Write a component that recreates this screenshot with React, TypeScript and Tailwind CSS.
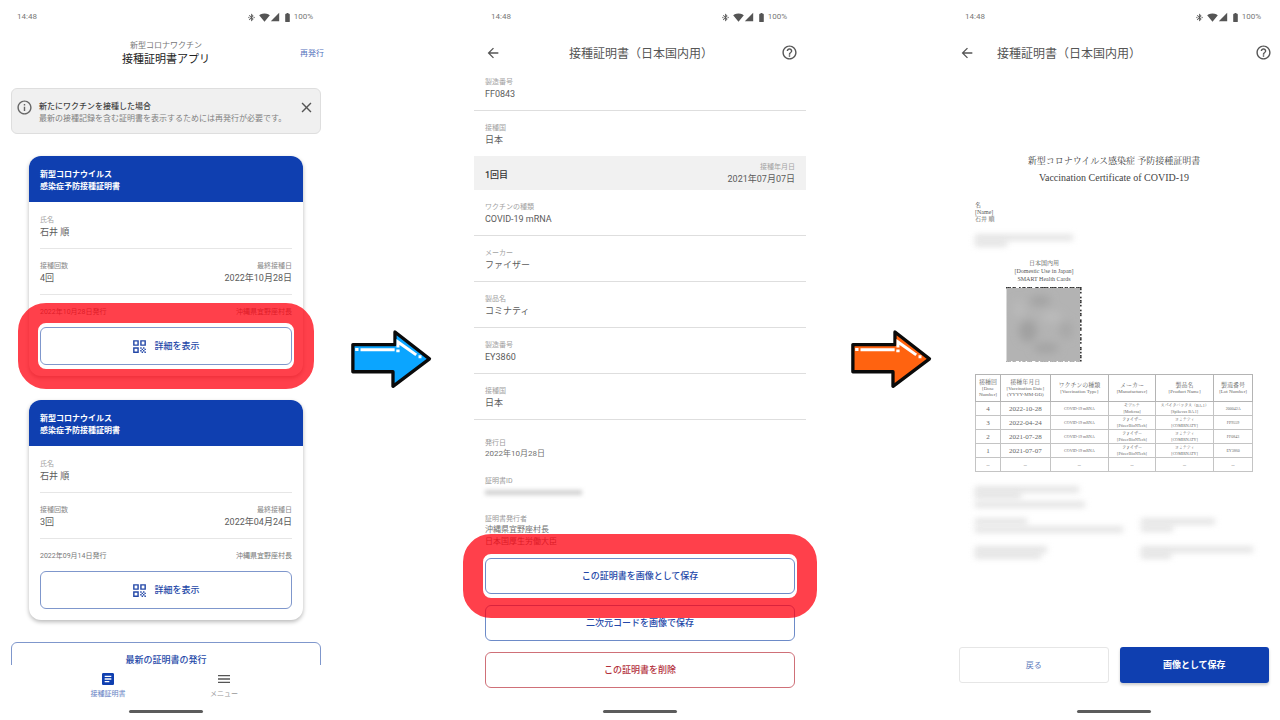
import type { ReactNode } from 'react'
import {
  MdArrowBack,
  MdArticle,
  MdBatteryFull,
  MdBluetoothConnected,
  MdClose,
  MdHelpOutline,
  MdInfoOutline,
  MdMenu,
  MdQrCode,
  MdSignalCellular4Bar,
  MdSignalWifi4Bar,
} from 'react-icons/md'

const certificates = [
  { name: '石井 順', count: '4回', lastDate: '2022年10月28日', issued: '2022年10月28日発行', issuer: '沖縄県宜野座村長', marked: true },
  { name: '石井 順', count: '3回', lastDate: '2022年04月24日', issued: '2022年09月14日発行', issuer: '沖縄県宜野座村長', marked: false },
]

const firstDose = [
  { label: 'ワクチンの種類', value: 'COVID-19 mRNA' },
  { label: 'メーカー', value: 'ファイザー' },
  { label: '製品名', value: 'コミナティ' },
  { label: '製造番号', value: 'EY3860' },
  { label: '接種国', value: '日本' },
]

const columns = [
  { ja: '接種回', en: ['[Dose', 'Number]'], width: 'w-[9%]' },
  { ja: '接種年月日', en: ['[Vaccination Date]', '(YYYY-MM-DD)'], width: 'w-[18%]' },
  { ja: 'ワクチンの種類', en: ['[Vaccination Type]'], width: 'w-[21%]' },
  { ja: 'メーカー', en: ['[Manufacturer]'], width: 'w-[17%]' },
  { ja: '製品名', en: ['[Product Name]'], width: 'w-[21%]' },
  { ja: '製造番号', en: ['[Lot Number]'], width: 'w-[14%]' },
]

const doses = [
  { no: '4', date: '2022-10-28', maker: ['モデルナ', '[Moderna]'], product: ['スパイクバックス（BA.1）', '[Spikevax BA.1]'], lot: '200042A' },
  { no: '3', date: '2022-04-24', maker: ['ファイザー', '[Pfizer/BioNTech]'], product: ['コミナティ', '[COMIRNATY]'], lot: 'FP9559' },
  { no: '2', date: '2021-07-28', maker: ['ファイザー', '[Pfizer/BioNTech]'], product: ['コミナティ', '[COMIRNATY]'], lot: 'FF0843' },
  { no: '1', date: '2021-07-07', maker: ['ファイザー', '[Pfizer/BioNTech]'], product: ['コミナティ', '[COMIRNATY]'], lot: 'EY3860' },
]

// Module pattern along the visible edges of the code
const topEdge = '1110110010110111001101111101111011101101110111'
const rightEdge = '1101001011010010110011010110010110100110101101'

function StatusBar() {
  return (
    <div className="flex h-8 shrink-0 items-center justify-between pt-0.5 pr-[19px] pl-[17px] text-[8px] text-[#777]">
      <span>14:48</span>
      <div className="flex items-center text-[#555]">
        <MdBluetoothConnected size={9} className="mr-[3px]" />
        <MdSignalWifi4Bar size={11} />
        <MdSignalCellular4Bar size={10} className="mr-0.5" />
        <MdBatteryFull size={11} />
        <span className="pl-px text-[#777]">100%</span>
      </div>
    </div>
  )
}

function HomeBar() {
  return (
    <div className="mt-auto flex h-[17px] shrink-0 items-center justify-center pb-px">
      <div className="h-[3px] w-[74px] rounded-full bg-[#5c5c5c]" />
    </div>
  )
}

function Highlight() {
  return (
    <div className="pointer-events-none absolute -top-6 -right-[22px] -bottom-6 -left-[22px] z-10 rounded-[28px] border-20 border-[#ff000f]/75" />
  )
}

function Field({ label, value }: { label: string; value: string }) {
  return (
    <div className="pt-3 pb-[9px]">
      <div className="text-[7px] leading-[10px] text-[#a3a3a3]">{label}</div>
      <div className="text-[9px] leading-[14px] text-[#5c5c5c]">{value}</div>
    </div>
  )
}

function CertificateCard({ cert }: { cert: (typeof certificates)[number] }) {
  return (
    <article className="rounded-xl bg-white shadow-[0_2px_4px_rgba(0,0,0,0.28)]">
      <h2 className="rounded-t-xl bg-[#0f3fb0] px-[11px] pt-[13px] pb-[9px] text-[8px] leading-3 font-bold text-white">
        新型コロナウイルス
        <br />
        感染症予防接種証明書
      </h2>
      <div className="px-[11px] pt-px pb-[11px]">
        <div className="border-b border-[#e6e6e6]">
          <Field label="氏名" value={cert.name} />
        </div>
        <div className="flex justify-between border-b border-[#e6e6e6] pt-3 pb-[9px]">
          <div>
            <div className="text-[7px] leading-[10px] text-[#888]">接種回数</div>
            <div className="text-[9px] leading-[14px] text-[#5c5c5c]">{cert.count}</div>
          </div>
          <div className="text-right">
            <div className="text-[7px] leading-[10px] text-[#888]">最終接種日</div>
            <div className="text-[9px] leading-[14px] text-[#5c5c5c]">{cert.lastDate}</div>
          </div>
        </div>
        <div className="flex justify-between pt-[11px] pb-[9px] text-[7px] leading-3 text-[#777]">
          <span>{cert.issued}</span>
          <span>{cert.issuer}</span>
        </div>
        <div className="relative">
          <button className="flex h-[38px] w-full items-center justify-center gap-[6px] rounded-md border border-[#7f97cc] pt-px pr-px text-[9px] font-medium text-[#2448a8]">
            <MdQrCode size={17} />
            <span className="pt-px">詳細を表示</span>
          </button>
          {cert.marked && <Highlight />}
        </div>
      </div>
    </article>
  )
}

function ListScreen() {
  return (
    <section className="flex h-screen min-w-0 flex-col overflow-hidden">
      <StatusBar />
      <header className="grid shrink-0 grid-cols-[1fr_auto_1fr] items-center px-2 pt-2 pb-5">
        <h1 className="col-start-2 text-center text-[11px] leading-4 text-[#222]">
          <span className="block text-[8px] leading-3 text-[#777]">新型コロナワクチン</span>
          接種証明書アプリ
        </h1>
        <button className="justify-self-end text-[8px] text-[#5370bc]">再発行</button>
      </header>

      <div className="min-h-0 flex-1 overflow-hidden">
        <div className="mx-[11px] flex items-start rounded-md border border-[#dedede] bg-[#f0f0f0] pt-[10px] pr-[5px] pb-2 pl-1">
          <MdInfoOutline size={17} className="mr-[6px] shrink-0 text-[#666]" />
          <div className="mt-0.5 flex-1 text-[8px] leading-3 whitespace-nowrap text-[#808080]">
            <p className="font-medium text-[#444]">新たにワクチンを接種した場合</p>
            <p>最新の接種記録を含む証明書を表示するためには再発行が必要です。</p>
          </div>
          <button aria-label="閉じる">
            <MdClose size={17} className="text-[#555]" />
          </button>
        </div>

        <div className="flex flex-col gap-6 px-[29px] pt-[22px] pb-[22px]">
          {certificates.map((cert) => (
            <CertificateCard key={cert.count} cert={cert} />
          ))}
        </div>

        <div className="px-[11px]">
          <button className="h-9 w-full rounded-md border border-[#7f97cc] text-[9px] leading-[9px] font-medium text-[#2448a8]">
            最新の証明書の発行
          </button>
        </div>
      </div>

      <nav className="flex shrink-0 justify-center pt-[6px] pb-1 text-[7px] leading-[10px]">
        <a href="#certificates" className="flex w-[116px] flex-col items-center gap-0.5 text-[#6580c3]">
          <MdArticle size={16} className="text-[#0f3fb0]" />
          接種証明書
        </a>
        <a href="#menu" className="flex w-[116px] flex-col items-center gap-0.5 text-[#999]">
          <MdMenu size={16} className="text-[#555]" />
          メニュー
        </a>
      </nav>
      <HomeBar />
    </section>
  )
}

function AppBar({ centered = false }: { centered?: boolean }) {
  return (
    <header className="flex h-[33px] shrink-0 items-center pt-2 pr-2 pl-[11px] text-[#555]">
      <button aria-label="戻る">
        <MdArrowBack size={16} />
      </button>
      <h1 className={`flex-1 pt-0.5 text-[12px] leading-4 ${centered ? 'text-center' : 'pl-[22px]'}`}>
        接種証明書（日本国内用）
      </h1>
      <button aria-label="ヘルプ">
        <MdHelpOutline size={17} />
      </button>
    </header>
  )
}

function Detail({ label, children }: { label: string; children: ReactNode }) {
  return (
    <div className="text-[8px] leading-3 text-[#707070]">
      <div className="text-[7px] leading-[10px] text-[#999]">{label}</div>
      {children}
    </div>
  )
}

function DetailScreen() {
  return (
    <section className="flex h-screen min-w-0 flex-col">
      <StatusBar />
      <AppBar centered />

      <div className="border-b border-[#dedede] px-[11px]">
        <Field label="製造番号" value="FF0843" />
      </div>
      <div className="px-[11px]">
        <Field label="接種国" value="日本" />
      </div>
      <div className="flex h-[34px] shrink-0 items-center justify-between bg-[#f1f1f1] px-[11px] pt-px text-[9px]">
        <h2 className="pt-0.5 leading-[14px] font-medium text-[#333]">1回目</h2>
        <div className="text-right leading-[14px] text-[#5c5c5c]">
          <div className="text-[7px] leading-[10px] text-[#a3a3a3]">接種年月日</div>
          2021年07月07日
        </div>
      </div>
      {firstDose.map((item) => (
        <div key={item.label} className="border-b border-[#dedede] px-[11px]">
          <Field label={item.label} value={item.value} />
        </div>
      ))}

      <div className="flex flex-col gap-4 px-[11px] pt-[18px] pb-[10px]">
        <Detail label="発行日">2022年10月28日</Detail>
        <Detail label="証明書ID">
          <div className="flex h-3 items-center">
            <div className="h-[5px] w-[97px] bg-[#d0d0d0] blur-[2px]" />
          </div>
        </Detail>
        <Detail label="証明書発行者">
          <p>沖縄県宜野座村長</p>
          <p>日本国厚生労働大臣</p>
        </Detail>
      </div>

      <div className="flex flex-col gap-[11px] px-[11px] text-[9px] font-medium text-[#2448a8]">
        <div className="relative">
          <button className="block h-9 w-full rounded-md border border-[#6d8bc8] pt-0.5">この証明書を画像として保存</button>
          <Highlight />
        </div>
        <button className="h-9 rounded-md border border-[#6d8bc8] pt-0.5">二次元コードを画像で保存</button>
        <button className="h-9 rounded-md border border-[#cf7078] pt-0.5 text-[#b3303c]">この証明書を削除</button>
      </div>
      <HomeBar />
    </section>
  )
}

function BlurredCode() {
  return (
    <svg viewBox="0 0 76 76" className="h-[76px] w-[76px]" role="img" aria-label="二次元コード">
      <defs>
        <filter id="soft" x="-20%" y="-20%" width="140%" height="140%">
          <feGaussianBlur stdDeviation="4" />
        </filter>
      </defs>
      {topEdge.split('').map((bit, i) => bit === '1' && <rect key={i} x={i * 1.63} y="0" width="1.63" height="1.6" fill="#333" />)}
      {rightEdge.split('').map((bit, i) => bit === '1' && <rect key={i} x="74" y={i * 1.62} width="1.6" height="1.62" fill="#333" />)}
      {topEdge.split('').map((bit, i) => bit === '1' && <rect key={i} x={i * 1.63} y="74.2" width="1.63" height="0.8" fill="#999" />)}
      <rect x="0.5" y="1" width="73.5" height="73" fill="#b3b3b3" />
      <g filter="url(#soft)">
        <ellipse cx="34" cy="14" rx="11" ry="5" fill="#a2a2a2" />
        <ellipse cx="22" cy="44" rx="9" ry="11" fill="#a0a0a0" />
        <ellipse cx="40" cy="61" rx="13" ry="5" fill="#a3a3a3" />
        <ellipse cx="60" cy="43" rx="7" ry="9" fill="#a8a8a8" />
        <ellipse cx="46" cy="30" rx="10" ry="5" fill="#bcbcbc" />
        <ellipse cx="13" cy="22" rx="6" ry="8" fill="#bababa" />
      </g>
    </svg>
  )
}

function Smudge({ className }: { className: string }) {
  return <div className={`h-[5px] bg-[#dcdcdc] blur-[3px] ${className}`} />
}

function DoseTable() {
  return (
    <table className="w-full table-fixed border-collapse text-center text-[4px] leading-[6px] text-[#666]">
      <thead>
        <tr className="h-[27px]">
          {columns.map((col) => (
            <th key={col.ja} className={`border border-[#b4b4b4] p-0 text-[5px] font-normal whitespace-nowrap ${col.width}`}>
              <div className="text-[6px] leading-[8px]">{col.ja}</div>
              {col.en.map((line) => (
                <div key={line}>{line}</div>
              ))}
            </th>
          ))}
        </tr>
      </thead>
      <tbody>
        {doses.map((dose) => (
          <tr key={dose.no} className="h-[14px] whitespace-nowrap">
            <td className="border border-[#c4c4c4] p-0 text-[7px]">{dose.no}</td>
            <td className="border border-[#c4c4c4] p-0 text-[7px]">{dose.date}</td>
            <td className="border border-[#c4c4c4] p-0">COVID-19 mRNA</td>
            <td className="border border-[#c4c4c4] p-0">
              {dose.maker[0]}
              <br />
              {dose.maker[1]}
            </td>
            <td className="border border-[#c4c4c4] p-0">
              {dose.product[0]}
              <br />
              {dose.product[1]}
            </td>
            <td className="border border-[#c4c4c4] p-0">{dose.lot}</td>
          </tr>
        ))}
        <tr className="h-[14px]">
          {columns.map((col) => (
            <td key={col.ja} className="border border-[#c4c4c4] p-0 text-[6px]">
              –
            </td>
          ))}
        </tr>
      </tbody>
    </table>
  )
}

function SaveScreen() {
  return (
    <section className="flex h-screen min-w-0 flex-col">
      <StatusBar />
      <AppBar />

      <div className="px-[27px] pt-[88px] font-['Liberation_Serif','Noto_Serif_CJK_JP','Noto_Sans_CJK_JP',serif] text-[#444]">
        <div className="text-center">
          <h2 className="text-[9px] leading-4">新型コロナウイルス感染症 予防接種証明書</h2>
          <p className="text-[10px] leading-[18px]">Vaccination Certificate of COVID-19</p>
        </div>
        <div className="pt-[15px] text-[6px] leading-[7px] text-[#555]">
          <p>名</p>
          <p>[Name]</p>
          <p>石井 順</p>
        </div>
        <div className="pt-3">
          <Smudge className="w-[98px]" />
          <Smudge className="mt-px w-[32px]" />
        </div>
        <div className="flex w-[138px] flex-col items-center pt-[13px] text-[6px] leading-[8px] text-[#555]">
          <p>日本国内用</p>
          <p>[Domestic Use in Japan]</p>
          <p className="pb-1">SMART Health Cards</p>
          <BlurredCode />
        </div>
        <div className="pt-[11px]">
          <DoseTable />
        </div>
        <div className="pt-[15px]">
          <Smudge className="w-[104px]" />
          <Smudge className="mt-px w-[46px]" />
          <Smudge className="mt-1 w-[110px]" />
        </div>
        <div className="grid grid-cols-[166px_1fr] gap-y-[15px] pt-3">
          <div>
            <Smudge className="w-[52px]" />
            <Smudge className="mt-[3px] w-[148px]" />
          </div>
          <div>
            <Smudge className="w-[74px]" />
            <Smudge className="mt-0.5 w-[32px]" />
          </div>
          <div>
            <Smudge className="w-[72px]" />
            <Smudge className="mt-px w-[66px]" />
          </div>
          <div>
            <Smudge className="w-[112px]" />
            <Smudge className="mt-px w-[30px]" />
          </div>
        </div>
      </div>

      <div className="mt-auto grid grid-cols-2 gap-[11px] px-[11px] pb-5">
        <button className="h-9 rounded-[3px] border border-[#e6e6e6] pt-0.5 text-[8px] text-[#5c7abb]">戻る</button>
        <button className="h-9 rounded-[3px] bg-[#0f3fb0] pt-0.5 text-[9px] font-bold text-white shadow-[0_2px_3px_rgba(0,0,0,0.2)]">
          画像として保存
        </button>
      </div>
      <div className="shrink-0">
        <HomeBar />
      </div>
    </section>
  )
}

function Arrow({ fill }: { fill: string }) {
  return (
    <svg viewBox="30 84 246 184" className="h-[61px] w-[82px] shrink-0" aria-hidden="true">
      <path d="M38 134H165V96L269 177L159 260V216H38Z" fill={fill} stroke="#0a0a0a" strokeWidth="10" strokeLinejoin="round" />
      <g fill="none" stroke="#fff" strokeWidth="9">
        <path d="M61 149.500H164" />
        <path d="M174 143V126L229 165" strokeLinejoin="miter" />
        <path d="M45 149h10M169 153h10M236 171h9" />
      </g>
    </svg>
  )
}

export default function App() {
  return (
    <main
      lang="ja"
      className="grid min-h-screen grid-cols-[332fr_142fr_332fr_142fr_332fr] bg-white font-[Roboto,'Noto_Sans_CJK_JP',sans-serif]"
    >
      <ListScreen />
      <div className="flex items-center pb-[3px] pl-[18px]">
        <Arrow fill="#0ba5ff" />
      </div>
      <DetailScreen />
      <div className="flex items-center pb-[3px] pl-11">
        <Arrow fill="#ff6310" />
      </div>
      <SaveScreen />
    </main>
  )
}
